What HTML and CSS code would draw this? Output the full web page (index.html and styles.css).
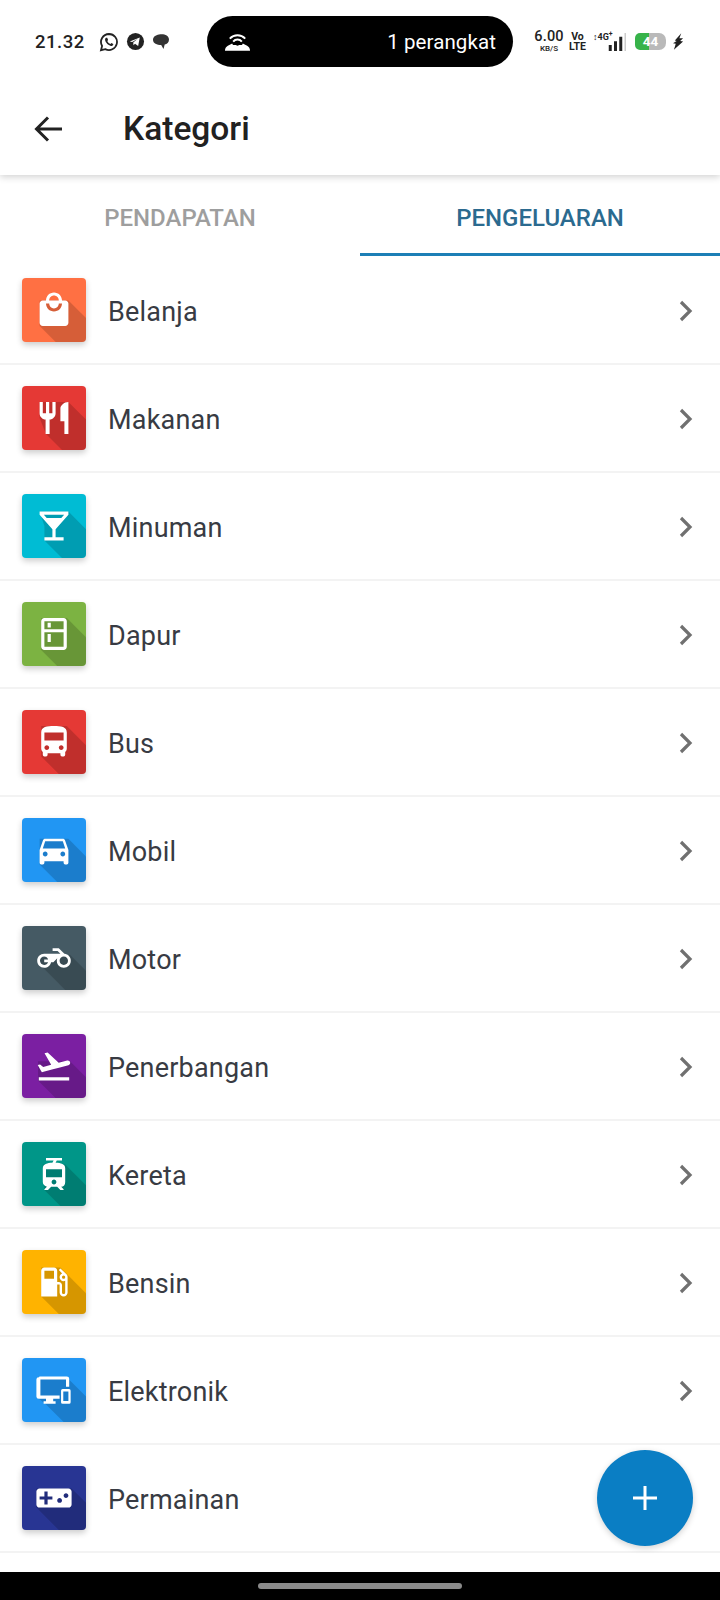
FILE: index.html
```html
<!DOCTYPE html>
<html lang="id">
<head>
    <meta charset="UTF-8">
    <meta name="viewport" content="width=device-width, initial-scale=1.0">
    <title>Kategori</title>
    <link rel="stylesheet" href="styles.css">
</head>
<body>
<div class="page">
    <div class="header">
        <div class="status">
            <span class="time">21.32</span>
            <div class="notif">
                <svg class="notif-wa" viewBox="0 0 20 20"><path d="M10 2a8 8 0 0 0-6.9 12L2 18.200l4.300-1.100A8 8 0 1 0 10 2z" fill="none" stroke="#222" stroke-width="1.800"/><path d="M7.200 5.800c-.6.300-1.300 1.100-1.100 2.300.4 2.500 3.100 5.300 5.800 5.900 1.200.2 2-.5 2.300-1.200l.1-.8-2-1-.8 1c-1.400-.5-2.600-1.700-3.200-3.100l.8-.9-.9-2.200z" fill="#222"/></svg>
                <svg class="notif-tg" viewBox="0 0 20 20"><circle cx="10" cy="10" r="9" fill="#222"/><path d="M4 10l10.500-4.300-1.700 9-3.300-2.400-1.600 1.600-.3-2.800 4.500-3.800-5.600 3.300z" fill="#fff"/></svg>
                <svg class="notif-msg" viewBox="0 0 18 18"><path d="M7 1.500c4.500-1 10 .6 10 5 0 3-2 4.600-4.300 5.100l-1.200 4.400-2.300-3.900C5 12 1 10.500 1 6.800 1 4 3.500 2.200 7 1.500z" fill="#333"/></svg>
            </div>
            <div class="hotspot">
                <svg class="hotspot-icon" viewBox="0 0 28 20"><path d="M6 6.500a11 11 0 0 1 16 0M9.500 9.500a6 6 0 0 1 9 0" fill="none" stroke="#fff" stroke-width="2"/><path d="M1 19c0-2 1-4 3-5l4.500-2.500a2 2 0 0 0 1 1.500h9a2 2 0 0 0 1-1.500L24 14c2 1 3 3 3 5z" fill="#fff"/><circle cx="14" cy="12" r="1.800" fill="#000"/></svg>
                <span>1 perangkat</span>
            </div>
            <div class="sys">
                <div class="speed"><b>6.00</b><small>KB/S</small></div>
                <div class="volte"><b>Vo</b><b>LTE</b></div>
                <div class="signal">
                    <span class="signal-type">&#8597;4G<sup>+</sup></span>
                    <svg viewBox="0 0 32 24"><path d="M9 16h4v8H9zM16 11h4v13h-4zM23 5h4v19h-4z" fill="#222"/><path d="M30 0h2v24h-2z" fill="#ccc"/></svg>
                </div>
                <div class="battery">44</div>
                <svg class="bolt" viewBox="0 0 12 18"><path d="M9 0L2 8l2 .5L0 11l3 .5L1 18l10-9-3.200-.5L11 5.500 7 5.500z" fill="#222"/></svg>
            </div>
        </div>
        <div class="toolbar">
            <svg class="back" viewBox="0 0 30 30"><path d="M29 15H4M15 3.500L3.500 15 15 26.500" fill="none" stroke="#222" stroke-width="3"/></svg>
            <h1 class="title">Kategori</h1>
        </div>
    </div>

    <div class="tabs">
        <div class="tab">PENDAPATAN</div>
        <div class="tab tab-active">PENGELUARAN</div>
    </div>

    <ul class="list">
        <li class="row">
            <div class="tile c-orange"><svg viewBox="0 0 40 40"><polygon class="shade" points="11,14 29,14 40,25 40,40 21,40 11,30"/><path class="glyph" transform="translate(8 8)" d="M19 6h-2c0-2.760-2.240-5-5-5S7 3.240 7 6H5c-1.100 0-1.990.9-1.990 2L3 20c0 1.100.9 2 2 2h14c1.100 0 2-.9 2-2V8c0-1.100-.9-2-2-2zm-7-3c1.660 0 3 1.340 3 3H9c0-1.660 1.340-3 3-3zm0 10c-2.760 0-5-2.240-5-5h2c0 1.660 1.340 3 3 3s3-1.340 3-3h2c0 2.760-2.240 5-5 5z"/></svg></div>
            <span class="name">Belanja</span>
            <svg class="chev" viewBox="0 0 16 24"><path d="M3 3l9 9-9 9" /></svg>
        </li>
        <li class="row">
            <div class="tile c-red"><svg viewBox="0 0 40 40"><polygon class="shade" points="11,10 29,10 40,21 40,40 25,40 15,30 11,20"/><path class="glyph" transform="translate(8 8)" d="M11 9H9V2H7v7H5V2H3v7c0 2.120 1.660 3.840 3.750 3.970V22h2.500v-9.030C11.340 12.840 13 11.120 13 9V2h-2v7zm5-3v8h2.500v8H21V2c-2.760 0-5 2.240-5 4z"/></svg></div>
            <span class="name">Makanan</span>
            <svg class="chev" viewBox="0 0 16 24"><path d="M3 3l9 9-9 9" /></svg>
        </li>
        <li class="row">
            <div class="tile c-cyan"><svg viewBox="0 0 40 40"><polygon class="shade" points="11,11 29,11 40,22 40,40 25,40 14,29 14,20"/><path class="glyph" transform="translate(8 8)" d="M21 5V3H3v2l8 9v5H6v2h12v-2h-5v-5l8-9zM7.430 7L5.660 5h12.690l-1.780 2H7.430z"/></svg></div>
            <span class="name">Minuman</span>
            <svg class="chev" viewBox="0 0 16 24"><path d="M3 3l9 9-9 9" /></svg>
        </li>
        <li class="row">
            <div class="tile c-green"><svg viewBox="0 0 40 40"><polygon class="shade" points="12,10 28,10 40,22 40,40 22,40 12,30"/><path class="glyph" transform="translate(8 8)" d="M18 2.010L6 2c-1.100 0-2 .89-2 2v16c0 1.100.9 2 2 2h12c1.100 0 2-.9 2-2V4c0-1.110-.9-1.990-2-1.990zM18 20H6v-9.020h12V20zm0-11H6V4h12v5zM8 5h2v3H8zm0 7h2v5H8z"/></svg></div>
            <span class="name">Dapur</span>
            <svg class="chev" viewBox="0 0 16 24"><path d="M3 3l9 9-9 9" /></svg>
        </li>
        <li class="row">
            <div class="tile c-red"><svg viewBox="0 0 40 40"><polygon class="shade" points="12,10 28,10 40,22 40,40 23,40 12,29"/><path class="glyph" transform="translate(8 8)" d="M4 16c0 .88.39 1.670 1 2.220V20c0 .55.45 1 1 1h1c.55 0 1-.45 1-1v-1h8v1c0 .55.45 1 1 1h1c.55 0 1-.45 1-1v-1.780c.61-.55 1-1.340 1-2.220V6c0-3.500-3.580-4-8-4s-8 .5-8 4v10zm3.500 1c-.83 0-1.500-.67-1.500-1.500S6.670 14 7.500 14s1.500.67 1.500 1.500S8.330 17 7.500 17zm9 0c-.83 0-1.500-.67-1.500-1.500s.67-1.500 1.500-1.500 1.500.67 1.500 1.500-.67 1.500-1.500 1.500zm1.500-6H6V6h12v5z"/></svg></div>
            <span class="name">Bus</span>
            <svg class="chev" viewBox="0 0 16 24"><path d="M3 3l9 9-9 9" /></svg>
        </li>
        <li class="row">
            <div class="tile c-blue"><svg viewBox="0 0 40 40"><polygon class="shade" points="11,13 29,13 40,24 40,40 22,40 11,29"/><path class="glyph" transform="translate(8 8)" d="M18.920 6.010C18.720 5.420 18.160 5 17.500 5h-11c-.66 0-1.210.42-1.420 1.010L3 12v8c0 .55.45 1 1 1h1c.55 0 1-.45 1-1v-1h12v1c0 .55.45 1 1 1h1c.55 0 1-.45 1-1v-8l-2.080-5.990zM6.500 16c-.83 0-1.500-.67-1.500-1.500S5.670 13 6.500 13s1.500.67 1.500 1.500S7.330 16 6.500 16zm11 0c-.83 0-1.500-.67-1.500-1.500s.67-1.500 1.500-1.500 1.500.67 1.500 1.500-.67 1.500-1.500 1.500zM5 11l1.500-4.500h11L19 11H5z"/></svg></div>
            <span class="name">Mobil</span>
            <svg class="chev" viewBox="0 0 16 24"><path d="M3 3l9 9-9 9" /></svg>
        </li>
        <li class="row">
            <div class="tile c-slate"><svg viewBox="0 0 40 40"><polygon class="shade" points="10,20 30,18 40,28 40,40 27,40 13,26"/><path class="glyph" transform="translate(9.500 9.500) scale(.875)" d="M19.440 9.030L15.410 5H11v2h3.590l2 2H5c-2.800 0-5 2.200-5 5s2.200 5 5 5c2.460 0 4.450-1.690 4.900-4h1.650l2.770-2.770c-.21.54-.32 1.140-.32 1.770 0 2.800 2.200 5 5 5s5-2.200 5-5c0-2.650-1.970-4.770-4.560-4.970zM7.820 15C7.400 16.150 6.280 17 5 17c-1.630 0-3-1.370-3-3s1.370-3 3-3c1.280 0 2.400.85 2.820 2H5v2h2.820zM19 17c-1.660 0-3-1.340-3-3s1.340-3 3-3 3 1.340 3 3-1.340 3-3 3z"/></svg></div>
            <span class="name">Motor</span>
            <svg class="chev" viewBox="0 0 16 24"><path d="M3 3l9 9-9 9" /></svg>
        </li>
        <li class="row">
            <div class="tile c-purple"><svg viewBox="0 0 40 40"><polygon class="shade" points="10,17 30,17 40,27 40,40 21,40 10,29"/><path class="glyph" transform="translate(8 8)" d="M2.500 19h19v2h-19zm19.570-9.360c-.21-.8-1.040-1.280-1.840-1.060L14.920 10l-6.900-6.430-1.930.51 4.140 7.170-4.970 1.330-1.970-1.540-1.450.39 1.820 3.160.77 1.330 1.600-.43 5.310-1.420 4.350-1.160L21 11.490c.81-.23 1.280-1.050 1.070-1.850z"/></svg></div>
            <span class="name">Penerbangan</span>
            <svg class="chev" viewBox="0 0 16 24"><path d="M3 3l9 9-9 9" /></svg>
        </li>
        <li class="row">
            <div class="tile c-teal"><svg viewBox="0 0 40 40"><polygon class="shade" points="13,14 27,14 40,27 40,40 24,40 14,30"/><path class="glyph" transform="translate(8 8)" d="M19 16.940V8.500c0-2.790-2.610-3.400-6.010-3.490l.76-1.510H17V2H7v1.500h4.750l-.76 1.520C7.860 5.110 5 5.730 5 8.500v8.440c0 1.450 1.190 2.660 2.590 2.970L6 21.500v.5h2.230l2-2H14l2 2h2v-.5L16.500 20h-.08c1.690 0 2.580-1.370 2.580-3.060zm-7 1.560c-.83 0-1.500-.67-1.500-1.500s.67-1.500 1.500-1.500 1.500.67 1.500 1.500-.67 1.500-1.500 1.500zm5-4.500H7V9h10v5z"/></svg></div>
            <span class="name">Kereta</span>
            <svg class="chev" viewBox="0 0 16 24"><path d="M3 3l9 9-9 9" /></svg>
        </li>
        <li class="row">
            <div class="tile c-amber"><svg viewBox="0 0 40 40"><polygon class="shade" points="12,11 24,11 28,15 40,27 40,40 23,40 12,29"/><path class="glyph" transform="translate(8 8)" d="M19.770 7.230l.01-.01-3.720-3.720L15 4.560l2.110 2.110c-.94.36-1.610 1.260-1.610 2.330 0 1.380 1.120 2.500 2.500 2.500.36 0 .69-.08 1-.21v7.210c0 .55-.45 1-1 1s-1-.45-1-1V14c0-1.100-.9-2-2-2h-1V5c0-1.100-.9-2-2-2H6c-1.100 0-2 .9-2 2v16h10v-7.500h1.500v5c0 1.380 1.120 2.500 2.500 2.500s2.500-1.120 2.500-2.500V9c0-.69-.28-1.320-.73-1.770zM12 10H6V5h6v5zm6 0c-.55 0-1-.45-1-1s.45-1 1-1 1 .45 1 1-.45 1-1 1z"/></svg></div>
            <span class="name">Bensin</span>
            <svg class="chev" viewBox="0 0 16 24"><path d="M3 3l9 9-9 9" /></svg>
        </li>
        <li class="row">
            <div class="tile c-blue"><svg viewBox="0 0 40 40"><polygon class="shade" points="10,12 28,12 40,24 40,40 26,40 15,29 10,25"/><path class="glyph" d="M11 11.500h17a1.500 1.500 0 0 1 1.500 1.500v5h-2v-4.500h-16v10h12v2h-4v1.500h1.500v1.600h-7.500v-1.600h1.500v-1.500h-4.500a1.500 1.500 0 0 1-1.500-1.500v-10.500a1.500 1.500 0 0 1 1.500-1.500z"/><path class="glyph" d="M25.400 19.400h4a1 1 0 0 1 1 1v7.200a1 1 0 0 1-1 1h-4a1 1 0 0 1-1-1v-7.200a1 1 0 0 1 1-1zm.4 1.600v5.800h3.200v-5.800z"/></svg></div>
            <span class="name">Elektronik</span>
            <svg class="chev" viewBox="0 0 16 24"><path d="M3 3l9 9-9 9" /></svg>
        </li>
        <li class="row">
            <div class="tile c-indigo"><svg viewBox="0 0 40 40"><polygon class="shade" points="9,14 31,14 40,23 40,40 23,40 9,26"/><path class="glyph" transform="translate(8 8)" d="M21 6H3c-1.100 0-2 .9-2 2v8c0 1.100.9 2 2 2h18c1.100 0 2-.9 2-2V8c0-1.100-.9-2-2-2zm-10 7H8v3H6v-3H3v-2h3V8h2v3h3v2zm4.500 2c-.83 0-1.500-.67-1.500-1.500s.67-1.500 1.500-1.500 1.500.67 1.500 1.500-.67 1.500-1.500 1.500zm4-3c-.83 0-1.500-.67-1.500-1.500S18.670 9 19.500 9s1.500.67 1.500 1.500-.67 1.500-1.500 1.500z"/></svg></div>
            <span class="name">Permainan</span>
        </li>
    </ul>

    <div class="navbar"><span class="pill"></span></div>

    <button class="fab"><svg viewBox="0 0 24 24"><path d="M12 0v24M0 12h24"/></svg></button>
</div>
</body>
</html>
```

FILE: styles.css
```css
*{
    margin: 0;
    padding: 0;
    box-sizing: border-box;
}
html,body{
    width: 100%;
    height: 100%;
    background: #fff;
    font-family: Roboto, "Liberation Sans", sans-serif;
}
.page{
    position: relative;
    width: 720px;
    height: 1600px;
    display: flex;
    flex-direction: column;
    overflow: hidden;
}

/* header */
.header{
    height: 175px;
    flex: none;
    background: #fff;
    box-shadow: 0 2px 7px rgba(0,0,0,.18);
    position: relative;
}
.status{
    height: 84px;
    padding: 0 0 1px 35px;
    display: flex;
    align-items: center;
}
.time{
    font-size: 18.500px;
    font-weight: 500;
    color: #222;
    letter-spacing: .5px;
    width: 64px;
}
.notif{
    width: 108px;
    display: flex;
    align-items: center;
    gap: 7px;
}
.notif-wa{
    width: 20px;
    height: 20px;
}
.notif-tg{
    width: 19px;
    height: 19px;
}
.notif-msg{
    width: 18px;
    height: 18px;
}
.hotspot{
    width: 306px;
    height: 51px;
    flex: none;
    background: #000;
    border-radius: 26px;
    display: flex;
    align-items: center;
    justify-content: space-between;
    padding: 0 17px 0 17px;
    color: #fff;
    font-size: 20.500px;
    letter-spacing: .1px;
}
.hotspot-icon{
    width: 27px;
    height: 20px;
}
.sys{
    margin-left: 21px;
    display: flex;
    align-items: center;
    color: #222;
}
.speed{
    display: flex;
    flex-direction: column;
    align-items: center;
    width: 30px;
    line-height: 1;
}
.speed b{
    font-size: 14.500px;
    font-weight: 500;
    letter-spacing: .2px;
}
.speed small{
    font-size: 8px;
    font-weight: 500;
}
.volte{
    margin-left: 5px;
    display: flex;
    flex-direction: column;
    align-items: center;
    width: 17px;
    line-height: 10px;
}
.volte b{
    font-size: 10.500px;
    font-weight: 700;
}
.signal{
    position: relative;
    margin-left: 7px;
    width: 33px;
    height: 18px;
}
.signal svg{
    position: absolute;
    right: 0;
    top: 0;
    width: 24px;
    height: 18px;
}
.signal-type{
    position: absolute;
    left: 0;
    top: -1px;
    font-size: 9px;
    font-weight: 700;
    line-height: 10px;
    white-space: nowrap;
}
.signal-type sup{
    font-size: 7px;
    line-height: 0;
}
.battery{
    margin-left: 9px;
    width: 31px;
    height: 17px;
    border-radius: 5px 7px 7px 5px;
    background: linear-gradient(90deg, #37b34a 46%, #b9b9b9 46%);
    color: #fff;
    font-size: 13.500px;
    font-weight: 700;
    line-height: 17px;
    text-align: center;
}
.bolt{
    margin-left: 7px;
    width: 11px;
    height: 17px;
}
.toolbar{
    height: 91px;
    display: flex;
    align-items: center;
    padding-bottom: 2px;
}
.back{
    margin-left: 33px;
    width: 30px;
    height: 30px;
}
.title{
    margin-left: 60px;
    font-size: 33.500px;
    font-weight: 500;
    color: #212121;
}

/* tabs */
.tabs{
    height: 81px;
    flex: none;
    display: flex;
}
.tab{
    width: 50%;
    height: 100%;
    display: flex;
    align-items: center;
    justify-content: center;
    padding-top: 4px;
    font-size: 24px;
    font-weight: 500;
    color: #9e9e9e;
}
.tab-active{
    padding-top: 7px;
    color: #2b6a8f;
    border-bottom: 3px solid #1c7fb6;
}

/* list */
.list{
    flex: 1;
    padding-top: 1px;
    list-style: none;
    overflow: hidden;
}
.row{
    height: 108px;
    display: flex;
    align-items: center;
    padding: 0 26px 0 22px;
    border-bottom: 2px solid #f3f3f3;
}
.tile{
    width: 64px;
    height: 64px;
    flex: none;
    border-radius: 4px;
    overflow: hidden;
    box-shadow: 0 3px 6px rgba(0,0,0,.2);
}
.tile svg{
    display: block;
    width: 64px;
    height: 64px;
}
.shade{
    fill: #000;
    fill-opacity: .16;
}
.glyph{
    fill: #fff;
    fill-rule: evenodd;
}
.c-orange{ background: #ff7043; }
.c-red{ background: #e53935; }
.c-cyan{ background: #00bcd4; }
.c-green{ background: #7cb342; }
.c-blue{ background: #2196f3; }
.c-slate{ background: #455a64; }
.c-purple{ background: #7b1fa2; }
.c-teal{ background: #009688; }
.c-amber{ background: #ffb300; }
.c-indigo{ background: #283593; }
.name{
    margin-left: 22px;
    padding-top: 3px;
    flex: 1;
    font-size: 27px;
    color: #383b43;
    letter-spacing: .2px;
}
.chev{
    margin-top: 2px;
    width: 16px;
    height: 24px;
    fill: none;
    stroke: #707070;
    stroke-width: 3.200px;
}

/* bottom */
.navbar{
    height: 28px;
    flex: none;
    background: #000;
    display: flex;
    align-items: center;
    justify-content: center;
}
.pill{
    width: 204px;
    height: 6px;
    border-radius: 3px;
    background: #8a8a8a;
}
.fab{
    position: absolute;
    left: 597px;
    top: 1450px;
    width: 96px;
    height: 96px;
    border: none;
    border-radius: 50%;
    background: #0a7ec4;
    box-shadow: 0 2px 6px rgba(0,0,0,.18);
    display: flex;
    align-items: center;
    justify-content: center;
}
.fab svg{
    width: 24px;
    height: 24px;
    fill: none;
    stroke: #fff;
    stroke-width: 3px;
}
```
